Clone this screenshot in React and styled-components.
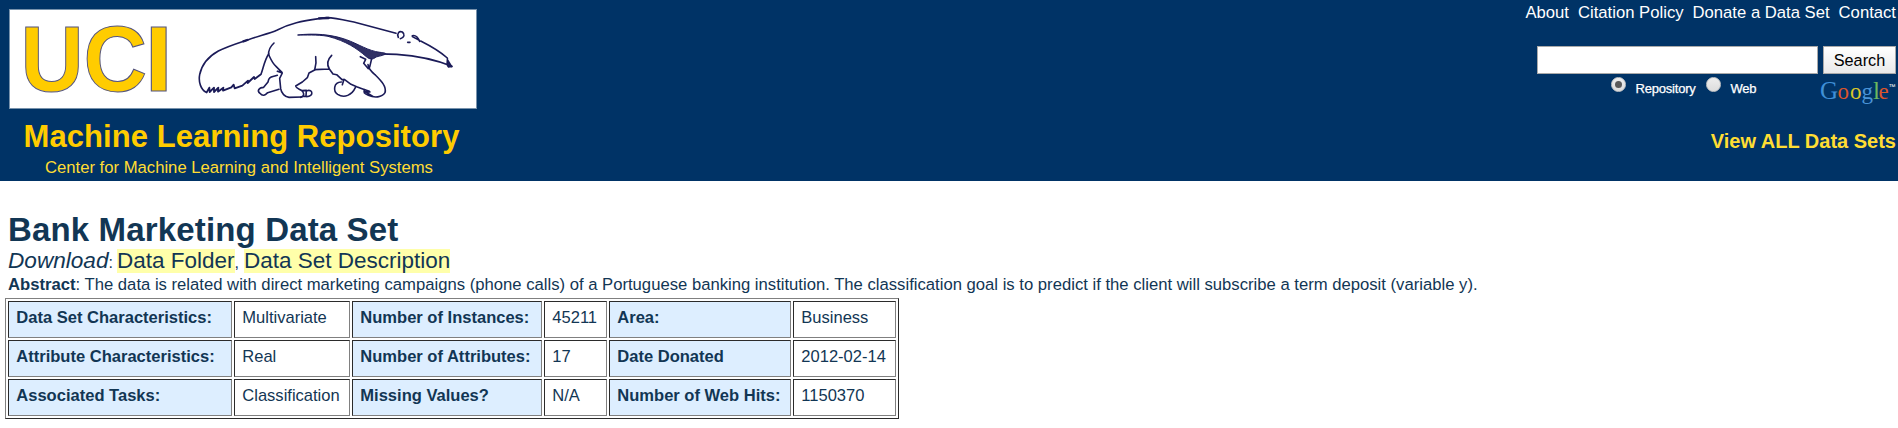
import React from 'react';
import styled, { createGlobalStyle } from 'styled-components';

const Global = createGlobalStyle`
  body { margin: 0; background: #fff; font: 16.67px/18px "Liberation Sans", Arial, sans-serif; color: #123654; overflow: hidden; }
  * { box-sizing: border-box; }
`;
const Header = styled.header`
  display: flex;
  justify-content: space-between;
  height: 181px;
  background: #003366;
`;
const Brand = styled.div`
  display: flex;
  flex-direction: column;
  padding: 9px 0 0 9px;
`;
const LogoBox = styled.div`
  width: 468px;
  height: 100px;
  border: 1px solid #7892ac;
  background: #fff;
  svg { display: block; }
`;
const LogoTitle = styled.div`
  margin: 10px 0 0 14.5px;
  font-size: 31px;
  line-height: 36px;
  font-weight: bold;
  letter-spacing: 0.07px;
  color: #ffcc00;
  white-space: nowrap;
`;
const LogoSub = styled.div`
  margin: 4px 0 0 36px;
  color: #ffdd33;
`;
const Side = styled.div`
  display: flex;
  flex-direction: column;
  align-items: flex-end;
  padding: 4px 2px 0 0;
`;
const Nav = styled.nav`
  display: flex;
  gap: 9px;
  color: #fff;
  white-space: nowrap;
`;
const SearchRow = styled.form`
  display: flex;
  gap: 5px;
  margin: 24px 0 0;
`;
const SearchInput = styled.input`
  width: 281px;
  height: 28px;
  border: 1px solid #a9a9a9;
  background: #fff;
  padding: 0 4px;
`;
const SearchButton = styled.button`
  width: 73px;
  height: 28px;
  padding: 0;
  border: 1px solid #a9a9a9;
  background: linear-gradient(#fff, #e9e9e9);
  font: 16.3px "Liberation Sans", Arial, sans-serif;
  color: #000;
`;
const ScopeRow = styled.div`
  display: flex;
  align-items: flex-start;
  width: 285px;
  height: 36px;
  color: #fff;
  font-size: 13px;
  letter-spacing: -0.2px;
  -webkit-text-stroke: 0.25px #fff;
  svg { margin: 6px 0 0 auto; -webkit-text-stroke: 0; letter-spacing: 0; }
`;
const Radio = styled.span`
  display: flex;
  align-items: center;
  justify-content: center;
  width: 15px;
  height: 15px;
  margin-top: 3px;
  border-radius: 50%;
  border: 1px solid #c9c9c9;
  background: linear-gradient(#eee, #ddd);
  &::after {
    content: "";
    width: 7px;
    height: 7px;
    border-radius: 50%;
    background: ${(p) => (p.$on ? '#5a5a5a' : 'transparent')};
  }
`;
const ScopeLabel = styled.span`
  width: ${(p) => p.$w}px;
  margin: 6px 0 0 9.5px;
`;
const ViewAll = styled.a`
  margin: 20px 0 0;
  font-size: 20px;
  line-height: 22px;
  font-weight: bold;
  color: #ffdd33;
`;
const Main = styled.main`
  padding: 29px 0 0 8px;
`;
const Title = styled.h1`
  margin: 0;
  font-size: 33px;
  line-height: 39px;
  letter-spacing: 0.15px;
`;
const Download = styled.p`
  display: flex;
  align-items: baseline;
  margin: 0;
  height: 26px;
  font-size: 16px;
  line-height: 24px;
  i { font-size: 22.6px; }
`;
const FileLink = styled.a`
  margin-left: ${(p) => p.$gap}px;
  font-size: 22.5px;
  line-height: 24px;
  background: #ffffaa;
`;
const Abstract = styled.p`
  margin: 1px 0 4px;
  white-space: nowrap;
`;
const Facts = styled.table`
  table-layout: fixed;
  width: 894px;
  margin-left: -3px;
  border-collapse: separate;
  border-spacing: 2px;
  border: 1px solid;
  border-color: #808080 #2b2b2b #2b2b2b #808080;
`;
const Cell = styled.td`
  height: 37px;
  padding: 0 0 3px 7.3px;
  border: 1px solid;
  border-color: #2b2b2b #808080 #808080 #2b2b2b;
  font-size: 16.55px;
  font-weight: ${(p) => (p.$head ? 'bold' : 'normal')};
  background: ${(p) => (p.$head ? '#ddeeff' : '#fff')};
  white-space: nowrap;
`;

const columns = [224, 116, 190, 63, 182, 103];
const rows = [
  ['Data Set Characteristics:', 'Multivariate', 'Number of Instances:', '45211', 'Area:', 'Business'],
  ['Attribute Characteristics:', 'Real', 'Number of Attributes:', '17', 'Date Donated', '2012-02-14'],
  ['Associated Tasks:', 'Classification', 'Missing Values?', 'N/A', 'Number of Web Hits:', '1150370'],
];

function Logo() {
  return (
    <svg width="466" height="98" viewBox="0 0 466 98">
      <g fontFamily="Liberation Sans, Arial, sans-serif" fontWeight="bold" fontSize="93" fill="#ffcc00" stroke="#55557f" strokeWidth="1">
        <text transform="translate(10.5 81) scale(.94 1)">U</text>
        <text transform="translate(73.5 81) scale(.948 1)">C</text>
        <text transform="translate(134.5 81) scale(1.1 1)">I</text>
      </g>
      <g transform="translate(170 -10) scale(.33333)" fill="none" stroke="#1b1b58" strokeWidth="4.8" strokeLinecap="round" strokeLinejoin="round">
        <path d="M79 277C62 269 55 245 59 224C66 190 88 168 115 153C145 138 178 128 205 119C235 108 268 101 292 90C330 70 365 63 417 56L440 53C470 54 500 62 530 68L648 100" />
        <path d="M190 124L202 120M417 55L446 54" strokeWidth="7" />
        <path d="M80 277L88 263L89 276L102 263L102 276L115 263L114 275L130 263L129 272L154 262L161 254L164 265L187 257L204 242L203 249L222 231L224 237L241 224" strokeWidth="5.5" />
        <path d="M282 129C270 140 265 151 266 164C273 179 277 190 288 199L306 217L292 214L307 219L299 235L302 266C304 280 315 291 327 292L366 291" />
        <path d="M266 162C253 181 250 205 243 223M292 226C273 232 267 229 264 246L251 262C235 263 231 274 240 280C248 290 255 286 263 278L297 268" />
        <path d="M407 170C410 187 407 200 404 210L387 219L382 233L367 246L347 258C350 268 360 266 368 274C375 286 369 289 362 292M366 272L379 271L378 289L370 289M381 272C399 266 402 290 380 290" />
        <path d="M455 166C441 180 441 195 448 207L404 209M448 207L459 222L470 224L486 239L494 239L513 253L530 260L546 266L568 274M492 238L487 254M484 246C460 247 459 273 473 283C493 296 516 285 526 263" />
        <path d="M564 194C566 209 575 216 585 224C601 240 621 259 615 278C606 293 583 294 565 286C553 281 548 277 554 269M554 274L570 276M552 273L580 290M541 170L557 178L551 190L565 206M576 172L569 201" />
        <path d="M575 161L650 163C710 167 760 176 816 199L806 201C797 194 804 181 802 174C776 151 748 136 722 123" />
        <path d="M804 182L808 198L815 200Z" fill="#303064" />
        <path d="M655 112C650 100 657 92 667 96C676 103 673 113 661 116M697 107C707 104 715 115 719 124M697 110L718 121M683 127L690 127" />
        <path d="M354 105C400 99 455 103 499 119C535 132 565 153 600 157C635 160 608 166 588 171C578 180 568 178 559 170C530 145 500 124 444 109C412 103 375 106 354 105Z" fill="#303064" strokeWidth="3" />
      </g>
    </svg>
  );
}

function GoogleMark() {
  return (
    <svg width="76" height="28" viewBox="0 0 76 28" fontFamily="Liberation Serif, serif" fontSize="23">
      <text y="19" stroke="none">
        <tspan x="0" fontSize="25" fill="#3f8fd6">G</tspan>
        <tspan x="17.5" fill="#d9542b">o</tspan>
        <tspan x="30" fill="#d8c52a">o</tspan>
        <tspan x="41.5" fill="#4a94d8">g</tspan>
        <tspan x="53" fontSize="25" fill="#6cb85e">l</tspan>
        <tspan x="58.5" fill="#d9542b">e</tspan>
        <tspan x="68.5" y="9" fontSize="7" fontFamily="Liberation Sans" fill="#fff">™</tspan>
      </text>
    </svg>
  );
}

export default function App() {
  return (
    <>
      <Global />
      <Header>
        <Brand>
          <LogoBox><Logo /></LogoBox>
          <LogoTitle>Machine Learning Repository</LogoTitle>
          <LogoSub>Center for Machine Learning and Intelligent Systems</LogoSub>
        </Brand>
        <Side>
          <Nav><a>About</a><a>Citation Policy</a><a>Donate a Data Set</a><a>Contact</a></Nav>
          <SearchRow>
            <SearchInput />
            <SearchButton type="button">Search</SearchButton>
          </SearchRow>
          <ScopeRow>
            <Radio $on /><ScopeLabel $w={70.5}>Repository</ScopeLabel>
            <Radio /><ScopeLabel $w={40}>Web</ScopeLabel>
            <GoogleMark />
          </ScopeRow>
          <ViewAll>View ALL Data Sets</ViewAll>
        </Side>
      </Header>
      <Main>
        <Title>Bank Marketing Data Set</Title>
        <Download>
          <i>Download</i>:<FileLink $gap={4}>Data Folder</FileLink>,<FileLink $gap={5}>Data Set Description</FileLink>
        </Download>
        <Abstract><b>Abstract</b>: The data is related with direct marketing campaigns (phone calls) of a Portuguese banking institution. The classification goal is to predict if the client will subscribe a term deposit (variable y).</Abstract>
        <Facts>
          <colgroup>{columns.map((w, i) => <col key={i} style={{ width: w }} />)}</colgroup>
          <tbody>
            {rows.map((r) => (
              <tr key={r[0]}>{r.map((t, i) => <Cell key={i} $head={i % 2 === 0}>{t}</Cell>)}</tr>
            ))}
          </tbody>
        </Facts>
      </Main>
    </>
  );
}
